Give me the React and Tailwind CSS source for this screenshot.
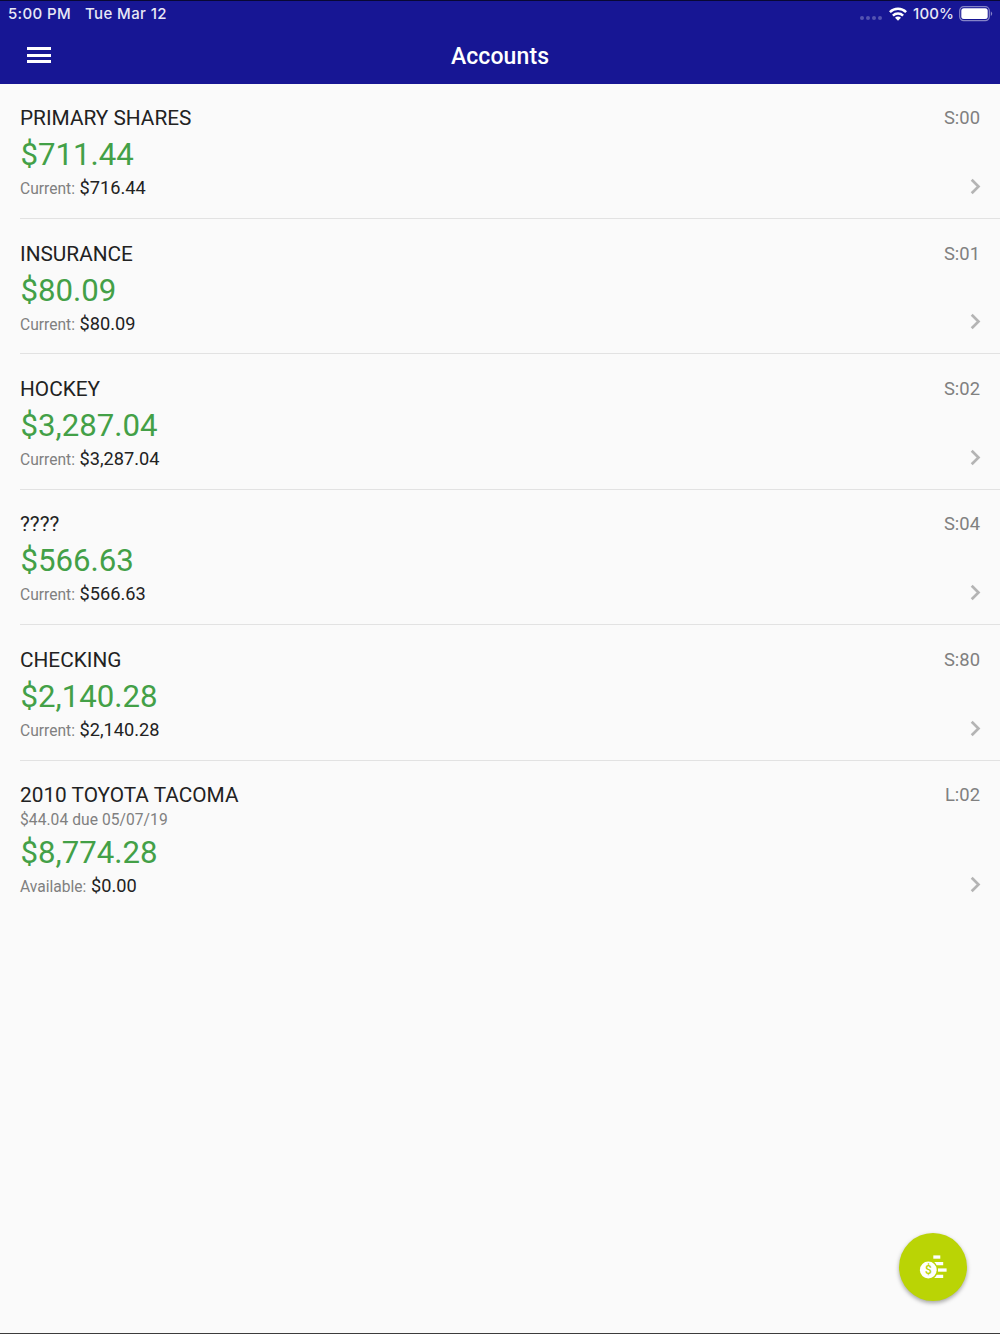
import React from 'react'

const accounts = [
  { name: 'PRIMARY SHARES', id: 'S:00', balance: '$711.44', label: 'Current:', amount: '$716.44' },
  { name: 'INSURANCE', id: 'S:01', balance: '$80.09', label: 'Current:', amount: '$80.09' },
  { name: 'HOCKEY', id: 'S:02', balance: '$3,287.04', label: 'Current:', amount: '$3,287.04' },
  { name: '????', id: 'S:04', balance: '$566.63', label: 'Current:', amount: '$566.63' },
  { name: 'CHECKING', id: 'S:80', balance: '$2,140.28', label: 'Current:', amount: '$2,140.28' },
  { name: '2010 TOYOTA TACOMA', id: 'L:02', due: '$44.04 due 05/07/19', balance: '$8,774.28', label: 'Available:', amount: '$0.00' },
]

function StatusBar() {
  return (
    <div className="flex h-[27px] items-center justify-between pl-[8px] pr-[7px] font-['Inter',sans-serif] text-[15px] font-medium text-[#e8e8f6]">
      <div className="flex gap-[14px]">
        <span className="tracking-[0.35px]">5:00 PM</span>
        <span className="tracking-[0.4px]">Tue Mar 12</span>
      </div>
      <div className="flex items-center">
        <div className="mr-[7px] mt-[7px] flex gap-[2px]">
          {[0, 1, 2, 3].map(i => (
            <span key={i} className="size-[4px] rounded-full bg-[#5453b0]" />
          ))}
        </div>
        <svg width="18" height="14" viewBox="0 0 18 14" className="mb-[2px] mr-[6px] fill-none stroke-white" strokeWidth="2.5">
          <path d="M0.9 5.2a11.5 11.5 0 0 1 16.2 0" />
          <path d="M3.9 8.6a7.2 7.2 0 0 1 10.2 0" />
          <path d="M9 13.8l-3-3a4.2 4.2 0 0 1 6 0z" className="fill-white" stroke="none" />
        </svg>
        <span className="mr-[5px] tracking-[0.1px]">100%</span>
        <svg width="34" height="16" viewBox="0 0 34 16" className="mb-[2px]">
          <rect x="0.7" y="0.7" width="29.6" height="14" rx="4" fill="none" stroke="#8584c8" strokeWidth="1.2" />
          <rect x="2.3" y="2.3" width="26.4" height="10.8" rx="2.5" fill="#fff" />
          <path d="M31.8 5.3q2.8 2.4 0 4.8z" fill="#8584c8" />
        </svg>
      </div>
    </div>
  )
}

function Header() {
  return (
    <header className="h-[83.6px] border-t border-[#080834] bg-[#171694] text-white">
      <StatusBar />
      <div className="grid h-[55px] grid-cols-[1fr_auto_1fr] items-center">
        <button className="mb-px ml-[27px] flex w-6 flex-col gap-[3.5px]" aria-label="Menu">
          <span className="h-[3px] w-full bg-white" />
          <span className="h-[3px] w-full bg-white" />
          <span className="h-[3px] w-full bg-white" />
        </button>
        <h1 className="pt-[2px] text-[23px] font-medium leading-none tracking-[0.1px]">Accounts</h1>
      </div>
    </header>
  )
}

function AccountRow({ account, last }) {
  return (
    <li className={`flex justify-between pr-[19px] pt-[22.7px] ${last ? '' : 'h-[135.4px] border-b border-[#e2e2e2]'}`}>
      <div>
        <div className="text-[20.8px] leading-[25px] text-[#222]">{account.name}</div>
        {account.due && (
          <div className="h-[20.8px] text-[15.6px] leading-[24px] tracking-[0.05px] text-[#808080]">{account.due}</div>
        )}
        <div className="mt-[4px] pl-[0.5px] text-[31.2px] leading-[40px] text-[#43a047]">{account.balance}</div>
        <div className="text-[15.6px] leading-[26px] text-[#808080]">
          {account.label} <span className="ml-[0.7px] text-[18.2px] text-[#222]">{account.amount}</span>
        </div>
      </div>
      <div className="flex flex-col items-end justify-between">
        <span className="pr-px text-[18.4px] leading-[23.5px] text-[#808080]">{account.id}</span>
        <svg width="11" height="17" viewBox="0 0 11 17" className={last ? 'mb-[7px]' : 'mb-[23px]'}>
          <path d="M1.7 1.7L8.5 8.5L1.7 15.3" fill="none" stroke="#b4b4b4" strokeWidth="2.7" />
        </svg>
      </div>
    </li>
  )
}

function CoinsIcon() {
  return (
    <svg width="28" height="26" viewBox="0 0 28 26" fill="#fff">
      <path d="M14.3 1.4h7v3.3h-7z" />
      <path d="M15.2 8h9v3.2h-6.6A10 10 0 0 0 15.2 8z" />
      <path d="M19 14.4h8.6v3.3H19z" />
      <path d="M17.8 20.7h6.4V24h-9a10 10 0 0 0 2.6-3.3z" />
      <circle cx="9.3" cy="16" r="8.4" />
      <text x="9.3" y="20.2" textAnchor="middle" className="fill-[#bad405] font-['Roboto',sans-serif] text-[12px] font-medium">$</text>
    </svg>
  )
}

export default function App() {
  return (
    <div className="relative flex h-[1334px] w-[1000px] flex-col overflow-hidden border-b border-[#3c3c3c] bg-[#fafafa] font-['Roboto',sans-serif]">
      <Header />
      <ul className="pl-5">
        {accounts.map((account, i) => (
          <AccountRow key={account.id} account={account} last={i === accounts.length - 1} />
        ))}
      </ul>
      <button
        className="absolute bottom-[32px] right-[33px] flex size-[68px] items-center justify-center rounded-full bg-[#bad405] shadow-[0_2px_4px_rgba(0,0,0,0.35)]"
        aria-label="Transfer"
      >
        <CoinsIcon />
      </button>
    </div>
  )
}
